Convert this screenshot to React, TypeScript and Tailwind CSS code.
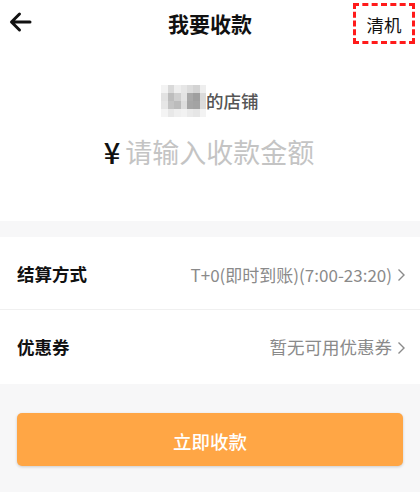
import React from "react";

const blocks = [
  ["#f3f3f3", "#d9d9d9", "#eeeeee", "#e6e6e6", "#dcdcdc", "#d3d3d3", "#eeeeee"],
  ["#e2e2e2", "#bdbdbd", "#cfcfcf", "#e3e3e3", "#a9a9a9", "#9f9f9f", "#dadada"],
  ["#e6e6e6", "#c4c4c4", "#bcbcbc", "#dddddd", "#a6a6a6", "#a3a3a3", "#dcdcdc"],
  ["#f4f4f4", "#e8e8e8", "#efefef", "#f2f2f2", "#eaeaea", "#e6e6e6", "#f3f3f3"],
];

function Chevron() {
  return (
    <svg width="9" height="14" viewBox="0 0 9 14" className="ml-[5px] shrink-0">
      <path d="M1.5 1.5 L7 7 L1.5 12.5" fill="none" stroke="#8a8a8a" strokeWidth="1.4" />
    </svg>
  );
}

export default function App() {
  return (
    <div
      className="w-[420px] h-[492px] bg-[#f7f7f8] overflow-hidden"
      style={{ fontFamily: '"Noto Sans CJK SC", "Noto Sans", sans-serif' }}
    >
      <div className="bg-white">
        <div className="relative h-[46px] flex items-center justify-center">
          <svg
            width="24"
            height="22"
            viewBox="0 0 24 22"
            className="absolute left-[8px] top-[11px]"
          >
            <path
              d="M22 11 H4 M11.5 3 L3.5 11 L11.5 19"
              fill="none"
              stroke="#111"
              strokeWidth="3"
              strokeLinecap="round"
              strokeLinejoin="round"
            />
          </svg>
          <span className="text-[21px] font-bold text-[#111] leading-none mt-[1px]">我要收款</span>
          <div className="absolute left-[353px] top-[3px] w-[62px] h-[41px] border-[3px] border-dashed border-[#ff1a1a] flex items-center justify-center">
            <span className="text-[17.5px] text-[#111] leading-none mt-[2px]">清机</span>
          </div>
        </div>
        <div className="h-[175px] flex flex-col items-center">
          <div className="mt-[39px] flex items-center">
            <div className="flex flex-col">
              {blocks.map((row, i) => (
                <div key={i} className="flex">
                  {row.map((c, j) => (
                    <div key={j} className="w-[6.4px] h-[8px]" style={{ background: c }} />
                  ))}
                </div>
              ))}
            </div>
            <span className="text-[17.5px] font-medium text-[#555] leading-none">的店铺</span>
          </div>
          <div className="mt-[20px] flex items-center mr-[2px]">
            <span className="text-[29px] font-medium text-[#111] leading-none mr-[5px]">¥</span>
            <span className="text-[27px] text-[#c4c4c4] leading-none">请输入收款金额</span>
          </div>
        </div>
      </div>
      <div className="h-[16px]" />
      <div className="bg-white">
        <div className="h-[73px] flex items-center justify-between pl-[17px] pr-[14px] border-b border-[#f0f0f0]">
          <span className="text-[17.5px] font-bold text-[#111] mt-[3px]">结算方式</span>
          <div className="flex items-center mt-[3px]">
            <span className="text-[17px] text-[#8a8a8a]">T+0(即时到账)(7:00-23:20)</span>
            <Chevron />
          </div>
        </div>
        <div className="h-[74px] flex items-center justify-between pl-[17px] pr-[14px]">
          <span className="text-[17.5px] font-bold text-[#111] mt-[1px]">优惠券</span>
          <div className="flex items-center mt-[1px]">
            <span className="text-[17.5px] text-[#8a8a8a]">暂无可用优惠券</span>
            <Chevron />
          </div>
        </div>
      </div>
      <div className="px-[17px] pt-[29px]">
        <div className="h-[53px] rounded-[5px] bg-[#ffa645] shadow-[0_1px_3px_rgba(0,0,0,0.18)] flex items-center justify-center">
          <span className="text-[18.5px] font-medium text-white mt-[4px]">立即收款</span>
        </div>
      </div>
    </div>
  );
}
